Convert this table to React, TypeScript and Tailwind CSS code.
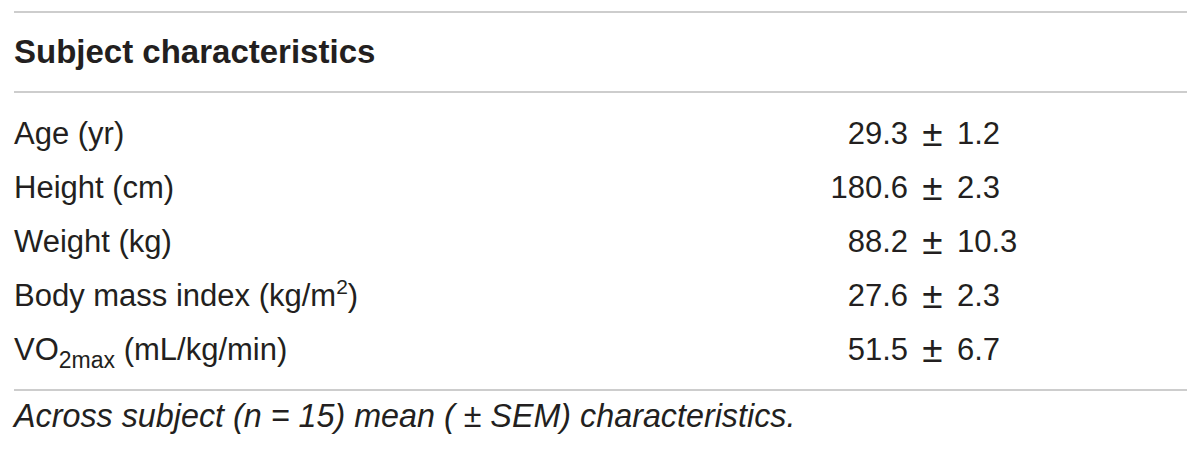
import React from "react";

const rows: { label: React.ReactNode; a: string; b: string }[] = [
  { label: "Age (yr)", a: "29.3", b: "1.2" },
  { label: "Height (cm)", a: "180.6", b: "2.3" },
  { label: "Weight (kg)", a: "88.2", b: "10.3" },
  {
    label: (
      <>
        Body mass index (kg/m<span className="inline-block align-baseline text-[21px] leading-[21px] relative top-[-12px]">2</span>)
      </>
    ),
    a: "27.6",
    b: "2.3",
  },
  {
    label: (
      <>
        VO<span className="inline-block align-baseline text-[23px] leading-[23px] relative top-[8px]">2max</span> (mL/kg/min)
      </>
    ),
    a: "51.5",
    b: "6.7",
  },
];

export default function App() {
  return (
    <div
      className="w-[1200px] h-[452px] bg-white text-[#231f20] pt-[11px] pl-[14px]"
      style={{ fontFamily: '"Liberation Sans", Arial, sans-serif' }}
    >
      <div className="w-[1173px]">
        <div className="h-[2px] bg-[#cdcdcd]" />
        <div className="h-[78px] leading-[78px] text-[33px] font-bold">Subject characteristics</div>
        <div className="h-[2px] bg-[#cdcdcd]" />
        <div className="pt-[14px] pb-[12px]">
          {rows.map((r, i) => (
            <div key={i} className="flex h-[54px] leading-[54px] text-[31px]">
              <div className="w-[794px] whitespace-nowrap">{r.label}</div>
              <div className="w-[100px] text-right">{r.a}</div>
              <div className="w-[49px] text-center text-[37px]">±</div>
              <div>{r.b}</div>
            </div>
          ))}
        </div>
        <div className="h-[2px] bg-[#cdcdcd]" />
        <div className="leading-[50px] text-[32.3px] italic whitespace-nowrap">
          Across subject (n = 15) mean ( ± SEM) characteristics.
        </div>
      </div>
    </div>
  );
}
